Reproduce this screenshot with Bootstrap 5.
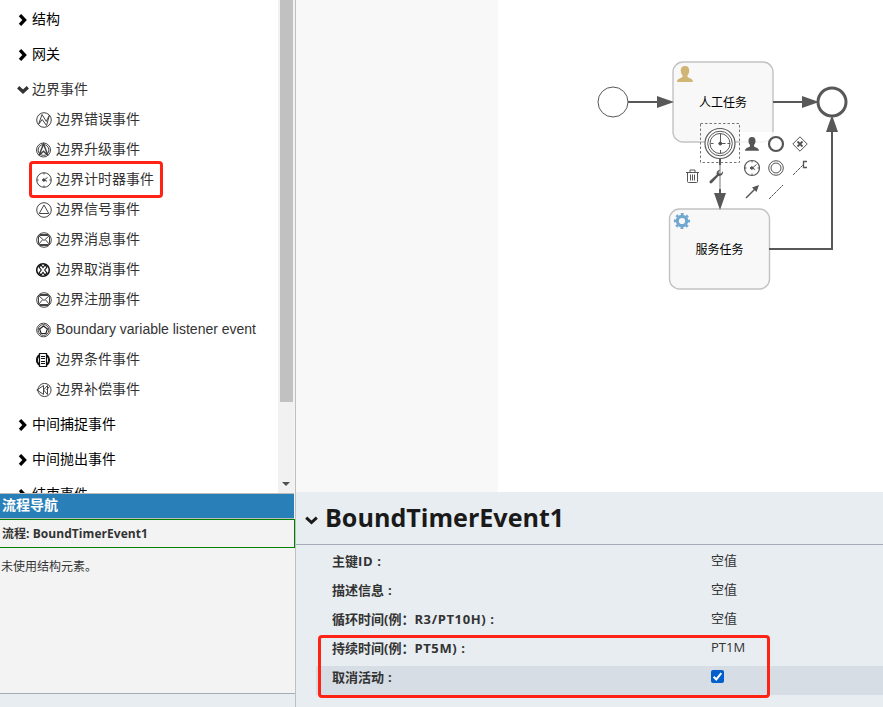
<!DOCTYPE html>
<html lang="zh-CN">
<head>
<meta charset="utf-8">
<meta name="viewport" content="width=device-width, initial-scale=1">
<title>BoundTimerEvent1</title>
<link href="https://cdn.jsdelivr.net/npm/bootstrap@5.3.0/dist/css/bootstrap.min.css" rel="stylesheet">
<style>
  body { font-family: "Open Sans", "Noto Sans CJK SC", sans-serif; font-size: 13px; color: #333; background: #fff; }
  .side { width: 296px; border-right: 1px solid #bfbfbf; background: #f3f3f3; }
  .palette { height: 493px; }
  .palette-list { font-family: "Liberation Sans", "Noto Sans CJK SC", sans-serif; font-size: 14px; background: #fff; padding-top: 2px; }
  .group-head { height: 35px; padding-left: 17px; color: #000; }
  .group-head svg { width: 12px; height: 12px; margin-right: 3px; }
  .group-head.opened { color: #333; }
  .group-items { margin: -3px 0 3px; }
  .entry { height: 30px; padding-left: 36px; color: #333; }
  .entry svg { width: 16px; height: 16px; margin-right: 4px; fill: none; stroke: #444; stroke-width: 1; position: relative; top: 1px; }
  .scroll-track { width: 15px; background: #f1f1f1; margin-right: 2px; }
  .scroll-thumb { width: 13px; height: 402px; margin-left: 2px; background: #c1c1c1; }
  .scroll-arrow { width: 8px; height: 4px; margin: 80px 0 0 4px; fill: #505050; }
  .marked-entry::after { content: ""; position: absolute; left: 29px; top: -3px; width: 134px; height: 37px; border: 3px solid #ff2316; border-radius: 4px; z-index: 2; }
  .nav-title { height: 26px; margin-right: 1px; padding: 0 0 2px 2px; color: #fff; font-size: 14px; line-height: 20px; background: #2980b9; border-top: 1px solid #bbb; border-bottom: 1px solid #bbb; }
  .nav-process { height: 29px; padding-left: 2px; font-size: 12px; letter-spacing: .05px; border: 1px solid #008000; border-left: 0; }
  .nav-empty { height: 145px; padding: 10px 0 0 1px; font-size: 12px; }
  .side-foot { background: #e8edf1; border-top: 1px solid #a4acba; }
  .canvas { height: 492px; }
  .props { background: #e8edf1; }
  .props-title { height: 53px; padding-left: 9px; border-bottom: 1px solid #a4acb9; color: #1a1a1a; font-size: 25.1px; }
  .props-title svg { width: 13px; height: 9px; margin: 5px 8px 0 0; }
  .props-title span { position: relative; left: -1px; }
  .prop { height: 29px; margin-left: 20px; padding: 0 0 6px 16px; }
  .prop-name { width: 379px; }
  .prop-name span { letter-spacing: .62px; }
  .prop-value { position: relative; top: -1px; }
  .prop.selected { background: #d6dde4; }
  .prop-list { padding-top: 5px; }
  .prop-mark { position: absolute; left: 22px; top: 90px; width: 452px; height: 63px; border: 3px solid #ff2316; border-radius: 4px; }
  .tick { width: 13px; height: 13px; display: block; }
  .task-label { font: 12px "Noto Sans CJK SC", sans-serif; fill: #000; text-anchor: middle; }
</style>
<script src="https://cdn.jsdelivr.net/npm/bootstrap@5.3.0/dist/js/bootstrap.bundle.min.js"></script>
</head>
<body class="overflow-hidden">
<svg class="d-none">
  <symbol id="chev-r" viewBox="0 0 12 12"><path d="M3 1.200 7.600 6 3 10.800" fill="none" stroke="currentColor" stroke-width="3.300"/></symbol>
  <symbol id="chev-d" viewBox="0 0 12 12"><path d="M1.200 3.200 6 7.700l4.800-4.500" fill="none" stroke="currentColor" stroke-width="3.300"/></symbol>
  <symbol id="env" viewBox="0 0 16 16"><circle cx="8" cy="8" r="7.300"/><rect x="2.500" y="3.500" width="11" height="9" rx="1"/><path d="m2.500 3.500 5.500 5 5.500-5M2.500 12.500l4-4.700M13.500 12.500l-4-4.700M4 2.500h8M4 13.500h8"/></symbol>
</svg>
<div class="d-flex vh-100">
  <aside class="side d-flex flex-column flex-shrink-0">
    <div class="palette d-flex overflow-hidden flex-shrink-0">
      <div class="palette-list flex-grow-1">
        <div class="group-head d-flex align-items-center"><svg><use href="#chev-r"/></svg>结构</div>
        <div class="group-head d-flex align-items-center"><svg><use href="#chev-r"/></svg>网关</div>
        <div class="group-head opened d-flex align-items-center"><svg><use href="#chev-d"/></svg>边界事件</div>
        <div class="group-items">
          <div class="entry d-flex align-items-center"><svg viewBox="0 0 16 16"><circle cx="8" cy="8" r="7.300"/><path d="M2.500 12.500 6 2.500l4.300 6.900L13.500 3l-3 10.500-4.300-6z"/></svg>边界错误事件</div>
          <div class="entry d-flex align-items-center"><svg viewBox="0 0 16 16"><circle cx="7.500" cy="8" r="7"/><circle cx="7.500" cy="8" r="5.400"/><path d="M7.500 2 3 13.500l4.500-4.200 4.500 4.200z" stroke-width="1.500"/></svg>边界升级事件</div>
          <div class="entry marked-entry position-relative d-flex align-items-center"><svg viewBox="0 0 16 16"><circle cx="8" cy="8" r="7.300"/><path d="M8 1v1.500M8 13.500V15M1 8h1.500M13.500 8H15"/><path d="m11.500 5.500-3.500 2.500 3 1.300"/><circle cx="7.800" cy="8" r="1.200" fill="#444"/></svg>边界计时器事件</div>
          <div class="entry d-flex align-items-center"><svg viewBox="0 0 16 16"><circle cx="8" cy="8" r="7.300"/><path d="M8 3 3.200 11.500h9.600z"/></svg>边界信号事件</div>
          <div class="entry d-flex align-items-center"><svg><use href="#env"/></svg>边界消息事件</div>
          <div class="entry d-flex align-items-center"><svg viewBox="0 0 16 16"><g stroke="#111"><circle cx="7" cy="8" r="6.300" stroke-width="1.500"/><path d="m3 5 2-2 2 2.700L9 3l2 2-2.300 3L11 11l-2 2-2-2.700L5 13l-2-2 2.300-3z" stroke-width="1.100"/></g></svg>边界取消事件</div>
          <div class="entry d-flex align-items-center"><svg><use href="#env"/></svg>边界注册事件</div>
          <div class="entry d-flex align-items-center"><svg viewBox="0 0 16 16"><circle cx="7.500" cy="8" r="6.800"/><circle cx="7.500" cy="8" r="5.400"/><path d="m7.500 4 3.900 3-1.500 4.500H5.100L3.600 7z" stroke="#222" stroke-width="1.200"/></svg>Boundary variable listener event</div>
          <div class="entry d-flex align-items-center"><svg viewBox="0 0 16 16"><g stroke="#111"><circle cx="7" cy="8" r="6.100" stroke-width="2"/><path d="M3.500 1.500h7v13h-7z" fill="#fff" stroke-width="1.200"/><path d="M5 4.500h4M5 6.500h4M5 9.500h4M5 11.500h4"/></g></svg>边界条件事件</div>
          <div class="entry d-flex align-items-center"><svg viewBox="0 0 16 16"><circle cx="8.500" cy="8" r="6.600"/><path d="M.8 8 7.500 3.600v8.800zM7.500 8l4-4.500v9zM10.500 8l3-3.500"/></svg>边界补偿事件</div>
        </div>
        <div class="group-head d-flex align-items-center"><svg><use href="#chev-r"/></svg>中间捕捉事件</div>
        <div class="group-head d-flex align-items-center"><svg><use href="#chev-r"/></svg>中间抛出事件</div>
        <div class="group-head d-flex align-items-center"><svg><use href="#chev-r"/></svg>结束事件</div>
      </div>
      <div class="scroll-track flex-shrink-0">
        <div class="scroll-thumb"></div>
        <svg class="scroll-arrow d-block" viewBox="0 0 8 4"><path d="M0 0h8L4 4z"/></svg>
      </div>
    </div>
    <div class="nav-title d-flex align-items-center fw-bold flex-shrink-0">流程导航</div>
    <div class="nav-process d-flex align-items-center fw-bold flex-shrink-0">流程: BoundTimerEvent1</div>
    <div class="nav-empty flex-shrink-0">未使用结构元素。</div>
    <div class="side-foot flex-grow-1"></div>
  </aside>
  <main class="flex-grow-1 d-flex flex-column">
    <svg class="canvas d-block flex-shrink-0" width="587" height="492" viewBox="296 0 587 492">
      <rect x="296" y="0" width="202" height="492" fill="#f8f8f8"/>
      <!-- tasks -->
      <g fill="#f8f8f8" stroke="#c2c2c2" stroke-width="1.400">
        <rect x="673" y="62" width="100" height="80" rx="10"/>
        <rect x="669.500" y="209" width="100" height="80" rx="10"/>
      </g>
      <rect x="740" y="132" width="72" height="70" fill="#fff" opacity=".8"/>
      <!-- sequence flows -->
      <g fill="none" stroke="#585858" stroke-width="2">
        <path d="M628 102h32M773 102h32M769 249h63V131"/>
        <path d="M720 165v24" stroke="#bbb"/>
        <path d="M720 159v6M720 189v6"/>
      </g>
      <g fill="#585858">
        <path d="M657 96l17 6-17 6zM802 96l17 6-17 6zM826 132l6-17 6 17zM714 193h12l-6 17z"/>
      </g>
      <circle cx="613" cy="102" r="15" fill="#fff" stroke="#585858"/>
      <circle cx="832" cy="102" r="14" fill="#fff" stroke="#585858" stroke-width="3"/>
      <!-- user and gear markers -->
      <path d="M685 66c3.300 0 4.300 2.200 4.200 5-.1 2.200-.8 3.200-1.700 4.300v1.500c.8 1.500 5.500 1.500 5.500 5.200h-16c0-3.700 4.700-3.700 5.500-5.200v-1.500c-.9-1.100-1.600-2.100-1.700-4.300-.1-2.800.9-5 4.200-5z" fill="#d1b575"/>
      <g stroke="#72a7d0" fill="none"><circle cx="682" cy="221" r="4.700" stroke-width="3.200"/><circle cx="682" cy="221" r="7" stroke-width="2.200" stroke-dasharray="2.750 2.748" stroke-dashoffset="1.375"/></g>
      <text class="task-label" x="723" y="106.500">人工任务</text>
      <text class="task-label" x="719.500" y="253.500">服务任务</text>
      <!-- boundary timer -->
      <rect x="700.500" y="123.500" width="39" height="39" fill="none" stroke="#777" stroke-dasharray="2.500 2"/>
      <g fill="none" stroke="#585858">
        <circle cx="720" cy="143.500" r="15" fill="#fff" stroke-width="1.200"/><circle cx="720" cy="143.500" r="12.300"/><circle cx="720" cy="143.500" r="10"/>
        <path d="M720.500 134v9.500h5M720.500 150v3M710.500 143.500h3M727.500 143.500h2.500"/>
        <circle cx="720.300" cy="143.500" r="1.500" fill="#444"/>
      </g>
      <!-- context pad -->
      <path d="M752 137c2.700 0 3.600 1.800 3.500 4.200-.1 1.800-.7 2.700-1.500 3.700v1.300c.7 1.300 5 1.300 5 4.600h-14c0-3.300 4.300-3.300 5-4.600v-1.300c-.8-1-1.400-1.900-1.500-3.700-.1-2.400.8-4.200 3.500-4.200z" fill="#555"/>
      <g fill="none" stroke="#555">
        <circle cx="776" cy="144" r="7" stroke-width="2.200"/>
        <path d="m800 136.800 7.200 7.200-7.200 7.200-7.200-7.200z"/><path d="m797.500 141.500 5 5m0-5-5 5" stroke-width="1.900"/>
        <circle cx="752" cy="168" r="7.500" stroke-width="1.200"/><path d="M752 161v1.500M752 173.500v1.500M745 168h1.500M757.500 168h1.500M752.500 168l4-3.500M752 168l3.200 1.500"/><circle cx="751.800" cy="168" r="1.300" fill="#555"/>
        <circle cx="776" cy="168" r="7.300"/><circle cx="776" cy="168" r="5"/>
        <path d="m793 175 10-10" stroke-dasharray="3 .6"/><path d="M807 161.500h-3.500v6h3.500" stroke-width="1.300"/>
        <path d="m746 198 9-9" stroke-width="1.400"/><path d="m759 185-2.500 7-4.500-4.500z" fill="#555" stroke="none"/>
        <path d="m769 199 14-14" stroke-dasharray="3 .6"/>
        <path d="M686 172.500h13M690 172v-2h5v2M687.500 173v8.500q0 1 1 1h8q1 0 1-1V173M690.500 174.500v6M692.500 174.500v6M694.500 174.500v6"/>
      </g>
      <path d="m709.800 181 7-6.500c-.7-2.500.7-4.700 3.600-4.800l-2 2.500 1.200 1.500 1.600-.1 1.700-2.300c.8 2.600-1.500 5-4.500 4.700l-6.500 7.100c-1.600 1-3-.6-2.100-2.100z" fill="#555"/>
    </svg>
    <section class="props flex-grow-1">
      <div class="props-title d-flex align-items-center fw-bold"><svg viewBox="0 0 13 9"><path d="M1.200 1.700 6.500 6.500l5.300-4.800" fill="none" stroke="#1a1a1a" stroke-width="3"/></svg><span>BoundTimerEvent1</span></div>
      <div class="prop-list position-relative pb-2">
        <div class="prop d-flex align-items-center"><div class="prop-name fw-bold">主键<span>ID :</span></div><div class="prop-value">空值</div></div>
        <div class="prop d-flex align-items-center"><div class="prop-name fw-bold">描述信息<span> :</span></div><div class="prop-value">空值</div></div>
        <div class="prop d-flex align-items-center"><div class="prop-name fw-bold">循环时间(例：<span>R3/PT10H) :</span></div><div class="prop-value">空值</div></div>
        <div class="prop d-flex align-items-center"><div class="prop-name fw-bold">持续时间(例：<span>PT5M) :</span></div><div class="prop-value">PT1M</div></div>
        <div class="prop selected d-flex align-items-center"><div class="prop-name fw-bold">取消活动<span> :</span></div><div class="prop-value"><svg class="tick" viewBox="0 0 13 13"><rect width="13" height="13" rx="2" fill="#005fcc"/><path d="m2.700 6.700 2.600 2.700 5-6.200" fill="none" stroke="#fff" stroke-width="2"/></svg></div></div>
        <div class="prop-mark"></div>
      </div>
    </section>
  </main>
</div>
</body>
</html>
